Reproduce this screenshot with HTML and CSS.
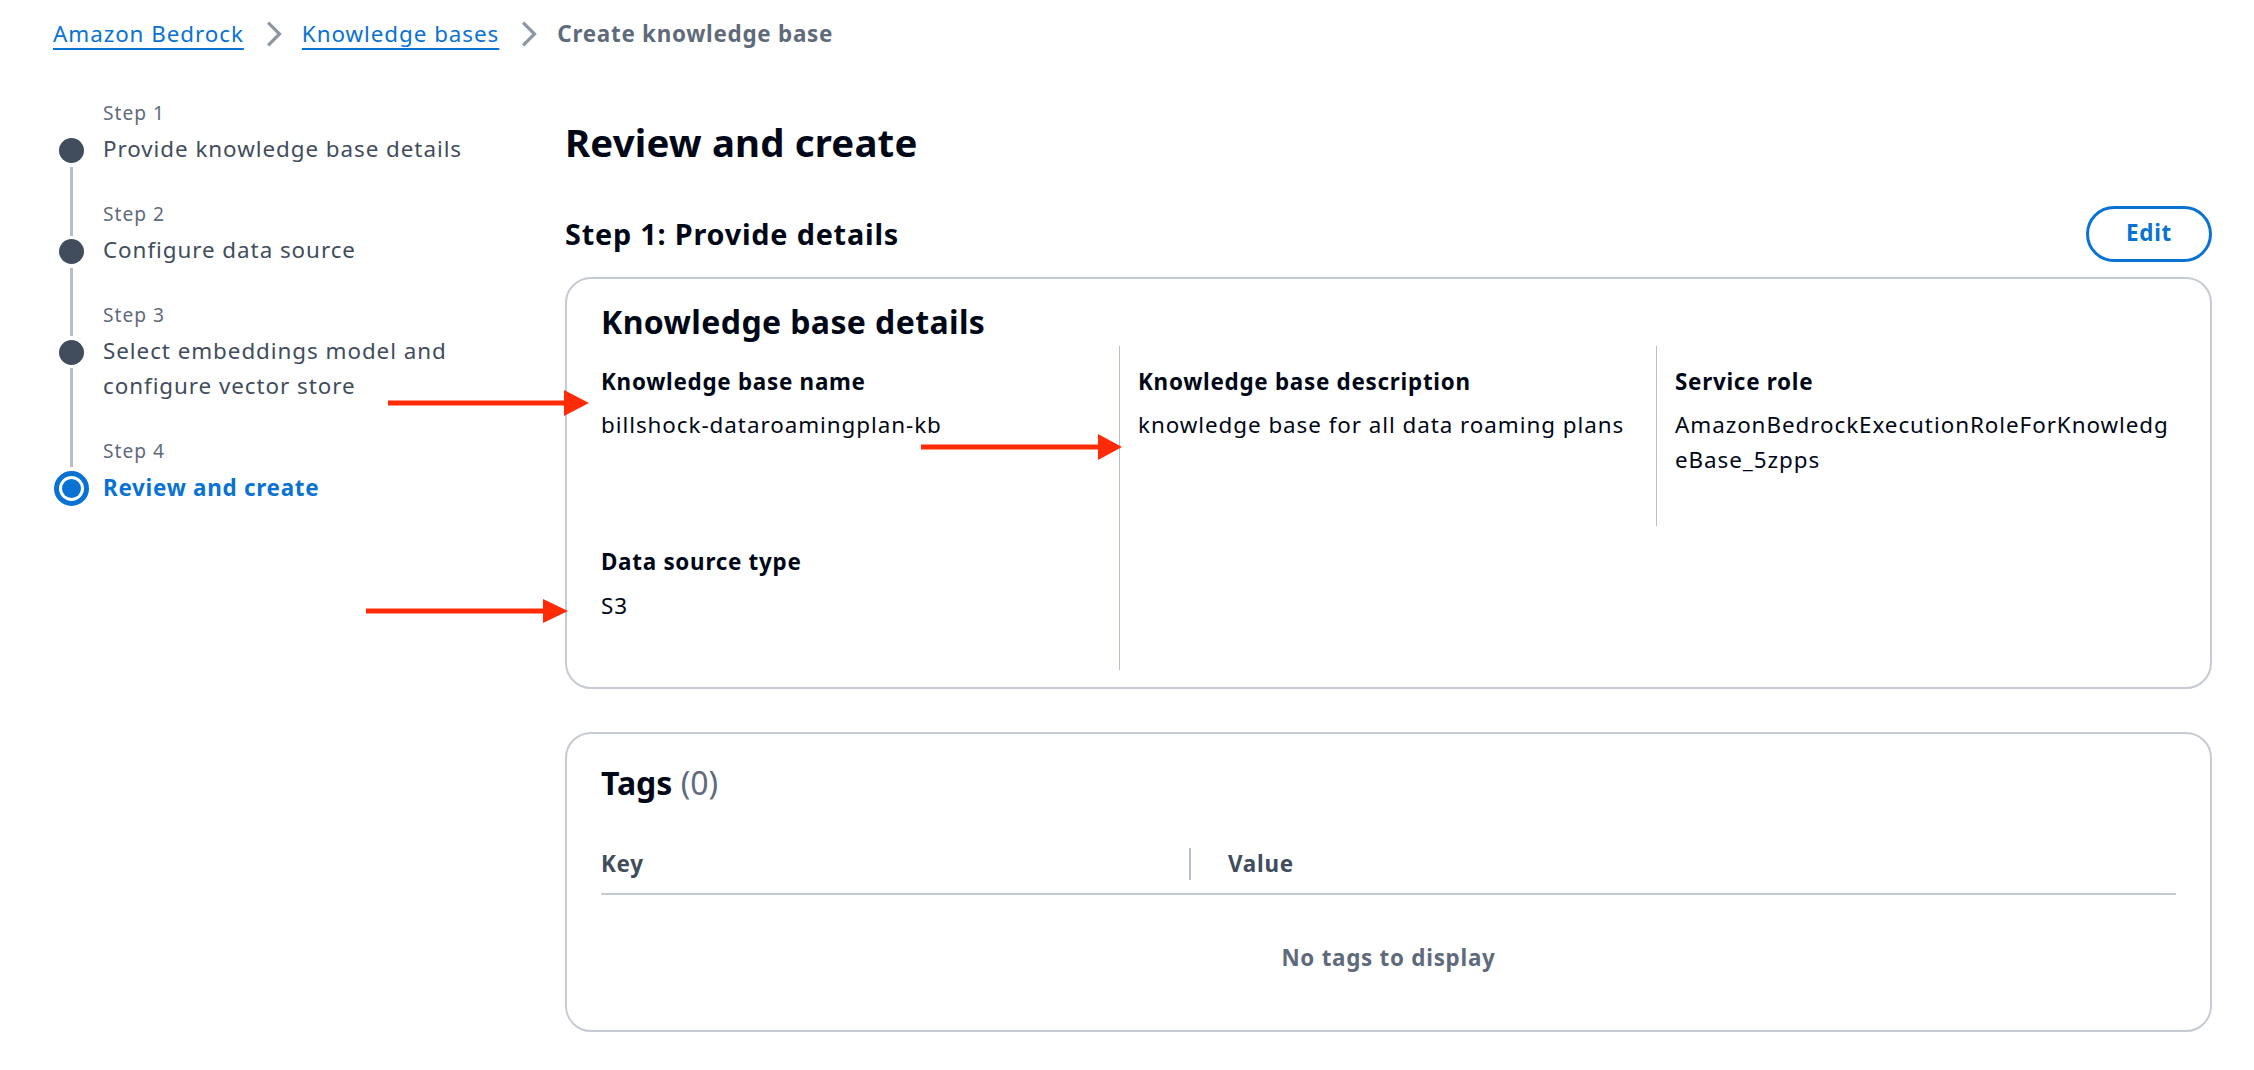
FILE: index.html
```html
<!DOCTYPE html>
<html lang="en">
<head>
<meta charset="utf-8">
<title>Create knowledge base</title>
<link rel="stylesheet" href="styles.css">
</head>
<body>
<div class="page">
  <nav class="breadcrumbs" aria-label="Breadcrumbs">
    <a class="crumb-link" href="#">Amazon Bedrock</a>
    <svg class="crumb-sep" viewBox="0 0 16 16" aria-hidden="true"><path d="M5 1l7 7-7 7"/></svg>
    <a class="crumb-link" href="#">Knowledge bases</a>
    <svg class="crumb-sep" viewBox="0 0 16 16" aria-hidden="true"><path d="M5 1l7 7-7 7"/></svg>
    <span class="crumb-current">Create knowledge base</span>
  </nav>

  <div class="wizard">
    <ol class="steps">
      <li class="step">
        <div class="step-rail"><span class="rail-top"></span><span class="dot"></span><span class="rail-bottom"></span></div>
        <div class="step-label">Step 1</div>
        <div class="step-title">Provide knowledge base details</div>
      </li>
      <li class="step">
        <div class="step-rail"><span class="rail-top"></span><span class="dot"></span><span class="rail-bottom"></span></div>
        <div class="step-label">Step 2</div>
        <div class="step-title">Configure data source</div>
      </li>
      <li class="step">
        <div class="step-rail"><span class="rail-top"></span><span class="dot"></span><span class="rail-bottom"></span></div>
        <div class="step-label">Step 3</div>
        <div class="step-title">Select embeddings model and configure vector store</div>
      </li>
      <li class="step active">
        <div class="step-rail"><span class="rail-top"></span><span class="dot"></span></div>
        <div class="step-label">Step 4</div>
        <div class="step-title">Review and create</div>
      </li>
    </ol>

    <main class="content">
      <h1 class="page-title">Review and create</h1>

      <section class="review-section">
        <div class="section-header">
          <h2 class="section-title">Step 1: Provide details</h2>
          <button class="btn-edit" type="button">Edit</button>
        </div>
        <div class="container details">
          <h3 class="container-title">Knowledge base details</h3>
          <div class="kv-grid">
            <div class="kv-item">
              <div class="kv-label">Knowledge base name</div>
              <div class="kv-value">billshock-dataroamingplan-kb</div>
            </div>
            <div class="kv-item">
              <div class="kv-label">Knowledge base description</div>
              <div class="kv-value">knowledge base for all data roaming plans</div>
            </div>
            <div class="kv-item">
              <div class="kv-label">Service role</div>
              <div class="kv-value">AmazonBedrockExecutionRoleForKnowledgeBase_5zpps</div>
            </div>
            <div class="kv-item">
              <div class="kv-label">Data source type</div>
              <div class="kv-value">S3</div>
            </div>
          </div>
        </div>
      </section>

      <section class="container tags">
        <h3 class="container-title">Tags <span class="counter">(0)</span></h3>
        <div class="tags-table" role="table">
          <div class="table-head" role="row">
            <div class="th th-key" role="columnheader">Key</div>
            <span class="th-divider" aria-hidden="true"></span>
            <div class="th th-value" role="columnheader">Value</div>
          </div>
          <div class="table-empty" role="row">No tags to display</div>
        </div>
      </section>
    </main>
  </div>
</div>

<svg class="annotations" width="2254" height="1070" viewBox="0 0 2254 1070" aria-hidden="true">
  <g fill="#ff2b06">
    <rect x="388" y="400.5" width="178" height="5"/>
    <polygon points="564,390 589,403 564,416"/>
    <rect x="921" y="444.5" width="179" height="5"/>
    <polygon points="1098,434 1122,447 1098,460"/>
    <rect x="366" y="608.5" width="179" height="5"/>
    <polygon points="543,599 568,611 543,623"/>
  </g>
</svg>
</body>
</html>
```
FILE: styles.css
```css
* { box-sizing: border-box; }

html, body {
  margin: 0;
  padding: 0;
  background: #ffffff;
}

body {
  font-family: "Noto Sans", "Open Sans", Arial, sans-serif;
  font-size: 22.4px;
  line-height: 35.2px;
  letter-spacing: 0.95px;
  color: #000716;
}

.page {
  padding: 16px 42px 0 53px;
}

/* Breadcrumbs */
.breadcrumbs {
  display: flex;
  align-items: center;
  height: 35.2px;
}

.crumb-link {
  color: #0972d3;
  text-decoration: underline;
  text-decoration-thickness: 2px;
  text-underline-offset: 6px;
}

.crumb-sep {
  width: 26px;
  height: 26px;
  margin: 0 16px;
  fill: none;
  stroke: #8d96a3;
  stroke-width: 2;
}

.crumb-current {
  font-weight: 700;
  letter-spacing: 0.73px;
  color: #5f6b7a;
}

/* Wizard layout */
.wizard {
  display: flex;
  margin-top: 49px;
}

.steps {
  list-style: none;
  margin: 0 62px 0 0;
  padding: 0;
  width: 450px;
  flex: none;
}

.step {
  display: grid;
  grid-template-columns: 36px 1fr;
  grid-template-rows: auto auto 34.5px;
  column-gap: 14px;
}

.step:last-child {
  grid-template-rows: auto auto;
}

.step-rail {
  grid-column: 1;
  grid-row: 1 / -1;
  display: flex;
  flex-direction: column;
  align-items: center;
}

.rail-top {
  width: 3px;
  height: 34.6px;
  flex: none;
  background: #b6bec9;
}

.step:first-child .rail-top {
  visibility: hidden;
}

.dot {
  width: 25px;
  height: 25px;
  margin: 3.5px 0;
  flex: none;
  border-radius: 50%;
  background: #414d5c;
}

.rail-bottom {
  width: 3px;
  flex: 1;
  background: #b6bec9;
}

.step-label {
  grid-column: 2;
  grid-row: 1;
  margin-bottom: 5.5px;
  font-size: 19.2px;
  line-height: 25.6px;
  letter-spacing: 1px;
  color: #5f6b7a;
}

.step-title {
  grid-column: 2;
  grid-row: 2;
  color: #414d5c;
}

.step.active .rail-top {
  height: 29.1px;
}

.step.active .dot {
  width: 35px;
  height: 35px;
  margin: 4px 0 0;
  border: 5px solid #0972d3;
  background: #ffffff;
  display: flex;
  align-items: center;
  justify-content: center;
}

.step.active .dot::after {
  content: "";
  width: 19px;
  height: 19px;
  border-radius: 50%;
  background: #0972d3;
}

.step.active .step-title {
  color: #0972d3;
  font-weight: 700;
  letter-spacing: 0.73px;
}

/* Main content */
.content {
  flex: 1;
  min-width: 0;
  padding-top: 18px;
}

.page-title {
  margin: 0;
  font-size: 38.4px;
  line-height: 48px;
  font-weight: 700;
  letter-spacing: 0.17px;
}

.section-header {
  display: flex;
  align-items: center;
  justify-content: space-between;
  height: 56px;
  margin-top: 39.5px;
}

.section-title {
  margin: 0;
  font-size: 28.8px;
  line-height: 35.2px;
  font-weight: 700;
  letter-spacing: 0.8px;
}

.btn-edit {
  width: 126px;
  height: 56px;
  padding: 0;
  border: 3px solid #0972d3;
  border-radius: 32px;
  background: #ffffff;
  color: #0972d3;
  font-family: inherit;
  font-size: 22.4px;
  font-weight: 700;
  letter-spacing: 0.73px;
  line-height: 1;
  cursor: pointer;
}

.container {
  border: 2px solid #c6cbd3;
  border-radius: 26px;
  background: #ffffff;
}

.container-title {
  margin: 0;
  font-size: 32px;
  line-height: 38.4px;
  font-weight: 700;
  letter-spacing: 0.39px;
}

.details {
  margin-top: 15px;
  padding: 24px 16px 17px;
}

.details .container-title {
  padding: 0 18px;
}

.kv-grid {
  display: grid;
  grid-template-columns: repeat(3, 1fr);
  margin-top: 4.6px;
}

.kv-item {
  padding: 18px 18px 47px;
  min-width: 0;
}

.kv-item:nth-child(-n+3) {
  padding-bottom: 49px;
}

.kv-item:nth-child(1),
.kv-item:nth-child(2),
.kv-item:nth-child(4) {
  border-right: 1px solid #b6bec9;
}

.kv-label {
  font-weight: 700;
  letter-spacing: 0.73px;
  margin-bottom: 8px;
}

.kv-value {
  overflow-wrap: anywhere;
}

/* Tags */
.tags {
  margin-top: 43px;
  padding: 30px 34px 0;
}

.tags .container-title {
  letter-spacing: 0;
}

.counter {
  font-weight: 400;
  color: #5f6b7a;
}

.table-head {
  display: flex;
  align-items: center;
  margin-top: 31.8px;
  padding: 12px 0;
  border-bottom: 2px solid #c6cbd3;
  color: #414d5c;
  font-weight: 700;
  letter-spacing: 0.73px;
}

.th-key {
  flex: 0 0 588px;
}

.th-divider {
  width: 2px;
  height: 32px;
  flex: none;
  background: #b6bec9;
}

.th-value {
  padding-left: 37px;
}

.table-empty {
  padding: 44.4px 0 55.4px;
  text-align: center;
  font-weight: 700;
  letter-spacing: 0.73px;
  color: #5f6b7a;
}

/* Annotation arrows drawn over the screenshot */
.annotations {
  position: absolute;
  top: 0;
  left: 0;
  pointer-events: none;
}
```
